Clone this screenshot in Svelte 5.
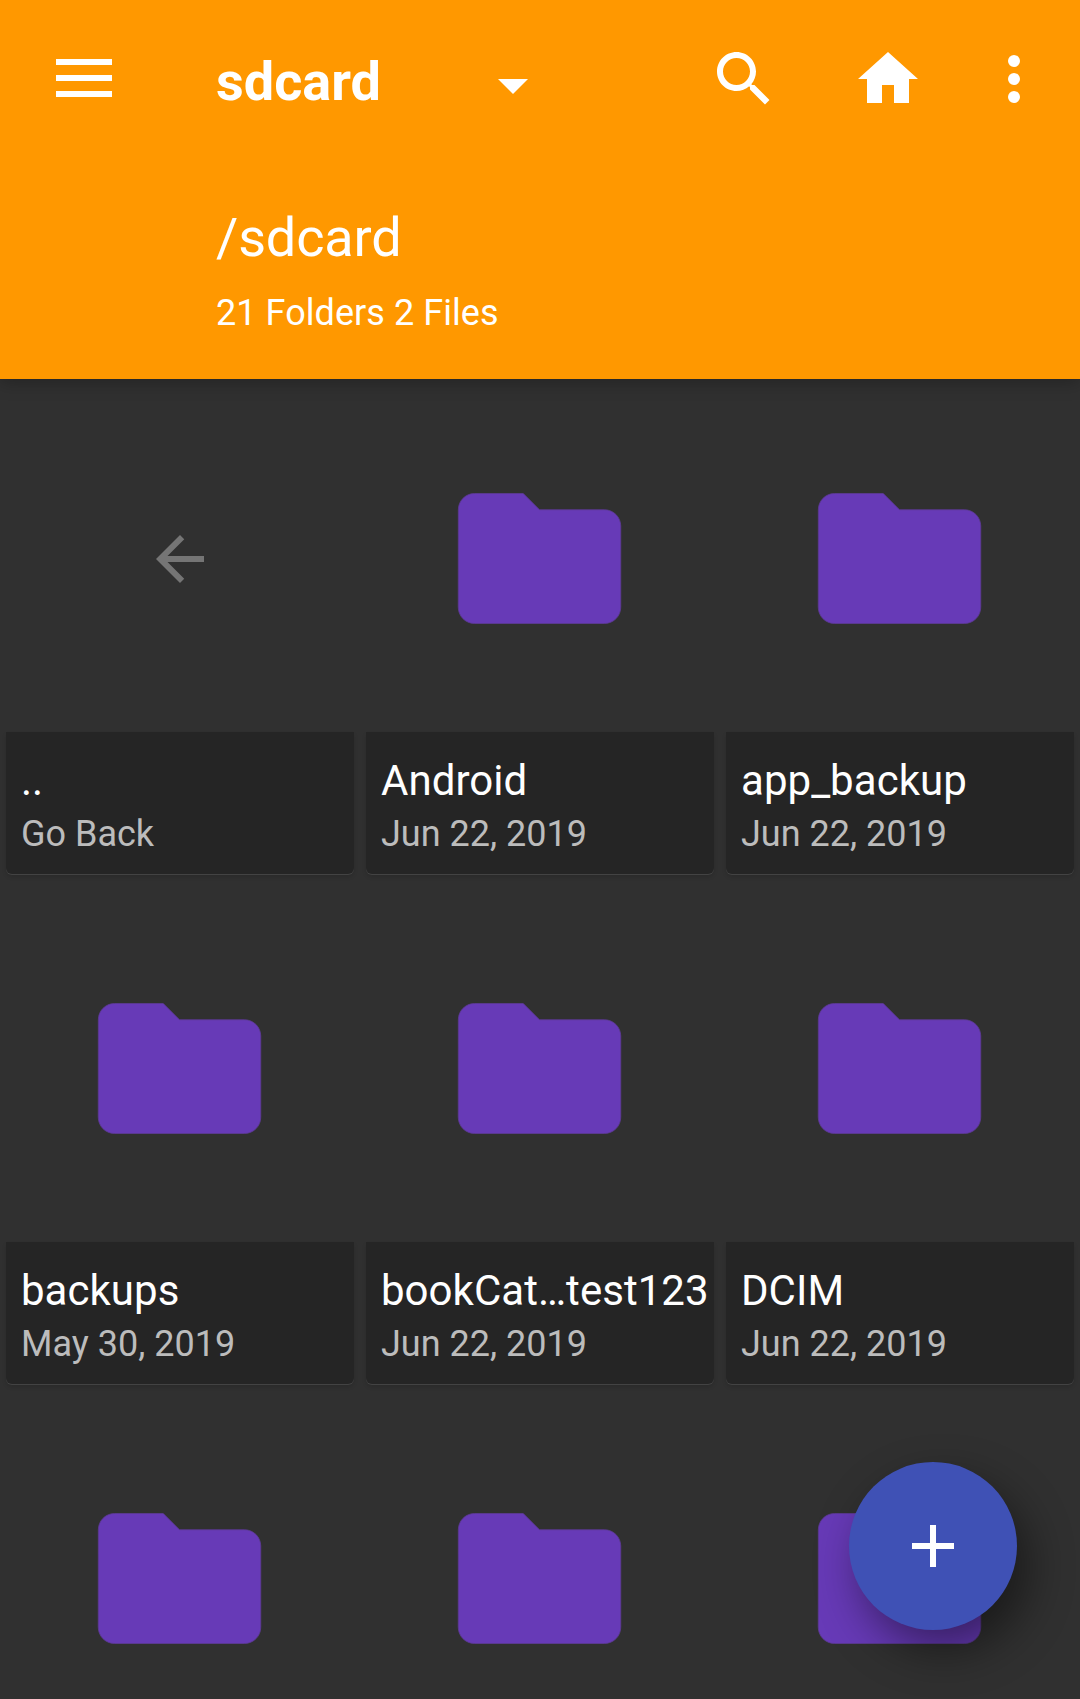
<script>
  const items = [
    { name: '..', detail: 'Go Back', back: true },
    { name: 'Android', detail: 'Jun 22, 2019' },
    { name: 'app_backup', detail: 'Jun 22, 2019' },
    { name: 'backups', detail: 'May 30, 2019' },
    { name: 'bookCat…test123', detail: 'Jun 22, 2019' },
    { name: 'DCIM', detail: 'Jun 22, 2019' },
    {}, {}, {}
  ];
</script>

<div class="screen">
  <header>
    <div class="toolbar">
      <button class="menu" aria-label="Menu">
        <svg width="56" height="38" viewBox="0 0 56 38"><path d="M0 0h56v6H0zM0 16h56v6H0zM0 32h56v6H0z" /></svg>
      </button>
      <h1>sdcard</h1>
      <svg class="caret" width="30" height="15" viewBox="0 0 30 15"><path d="M0 0h30L15 15z" /></svg>
      <div class="actions">
        <button aria-label="Search">
          <svg width="72" height="72" viewBox="0 0 24 24"><path d="M15.5 14h-.79l-.28-.27C15.41 12.59 16 11.11 16 9.5 16 5.91 13.09 3 9.5 3S3 5.91 3 9.5 5.91 16 9.5 16c1.61 0 3.09-.59 4.23-1.57l.27.28v.79l5 4.99L20.49 19l-4.99-5zm-6 0C7.01 14 5 11.99 5 9.5S7.01 5 9.5 5 14 7.01 14 9.5 11.99 14 9.5 14z" /></svg>
        </button>
        <button aria-label="Home">
          <svg width="72" height="72" viewBox="0 0 24 24"><path d="M10 20v-6h4v6h5v-8h3L12 3 2 12h3v8z" /></svg>
        </button>
        <button class="more" aria-label="More options">
          <svg width="72" height="72" viewBox="0 0 24 24"><circle cx="12" cy="6" r="2" /><circle cx="12" cy="12" r="2" /><circle cx="12" cy="18" r="2" /></svg>
        </button>
      </div>
    </div>
    <div class="path">/sdcard</div>
    <div class="count">21 Folders 2 Files</div>
  </header>

  <main>
    {#each items as item}
      <article>
        <div class="thumb">
          {#if item.back}
            <svg class="back" width="72" height="72" viewBox="0 0 24 24"><path d="M20 11H7.83l5.59-5.59L12 4l-8 8 8 8 1.41-1.41L7.83 13H20v-2z" /></svg>
          {:else}
            <svg class="folder" width="195" height="195" viewBox="0 0 24 24"><path d="M10 4H4c-1.1 0-1.99.9-1.99 2L2 18c0 1.1.9 2 2 2h16c1.1 0 2-.9 2-2V8c0-1.1-.9-2-2-2h-8l-2-2z" /></svg>
          {/if}
        </div>
        {#if item.name}
          <div class="info">
            <div class="name">{item.name}</div>
            <div class="detail">{item.detail}</div>
          </div>
        {/if}
      </article>
    {/each}
  </main>

  <button class="fab" aria-label="Add">
    <svg width="72" height="72" viewBox="0 0 24 24"><path d="M19 13h-6v6h-2v-6H5v-2h6V5h2v6h6v2z" /></svg>
  </button>
</div>

<style>
  :global(body) {
    margin: 0;
    background: #303030;
  }
  .screen {
    position: relative;
    display: flex;
    flex-direction: column;
    width: 1080px;
    height: 1699px;
    overflow: hidden;
    background: #303030;
    color: #fff;
    font-family: Roboto, 'Liberation Sans', sans-serif;
  }
  button {
    display: flex;
    padding: 0;
    border: 0;
    background: none;
    color: inherit;
  }
  svg {
    display: block;
    flex: none;
    fill: currentColor;
  }
  header {
    flex: none;
    box-sizing: border-box;
    height: 379px;
    background: #ff9800;
    box-shadow: 0 4px 16px rgba(0, 0, 0, 0.25);
  }
  .toolbar {
    display: flex;
    align-items: center;
    height: 158px;
    padding: 0 30px 0 56px;
  }
  .menu {
    width: 160px;
    padding-bottom: 2px;
  }
  h1 {
    margin: 0;
    padding-top: 6px;
    width: 282px;
    font-size: 54px;
    line-height: 64px;
    font-weight: 700;
  }
  .caret {
    margin-top: 15px;
  }
  .actions {
    display: flex;
    margin-left: auto;
    gap: 72px;
  }
  .more {
    margin-left: -18px;
  }
  .path {
    padding: 48px 0 0 216px;
    font-size: 54px;
    line-height: 64px;
    letter-spacing: -0.15px;
  }
  .count {
    padding: 22px 0 0 216px;
    font-size: 36px;
    line-height: 42px;
    letter-spacing: 0.06px;
  }
  main {
    display: grid;
    grid-template-columns: repeat(3, 348px);
    grid-auto-rows: 490px;
    gap: 20px 12px;
    padding: 5px 6px 0;
  }
  .thumb {
    display: flex;
    align-items: center;
    justify-content: center;
    height: 348px;
  }
  .back {
    margin-top: 2px;
    color: #757575;
  }
  .folder {
    margin-right: 1px;
    color: #673ab7;
  }
  .folder path {
    stroke: #5c3a94;
    stroke-width: 0.1;
  }
  .info {
    box-sizing: border-box;
    height: 142px;
    padding: 24px 0 0 15px;
    border-radius: 0 0 6px 6px;
    background: #252525;
    box-shadow: 0 1px 0 #434343, 0 3px 4px rgba(0, 0, 0, 0.12);
    white-space: nowrap;
  }
  .name {
    font-size: 42px;
    line-height: 50px;
    letter-spacing: 0.04px;
  }
  .detail {
    padding-top: 7px;
    font-size: 36px;
    line-height: 42px;
    color: #bcbcbc;
  }
  .fab {
    position: absolute;
    right: 63px;
    bottom: 69px;
    align-items: center;
    justify-content: center;
    width: 168px;
    height: 168px;
    border-radius: 50%;
    background: #3f51b5;
    box-shadow: 11px 20px 46px rgba(0, 0, 0, 0.46);
  }
</style>
